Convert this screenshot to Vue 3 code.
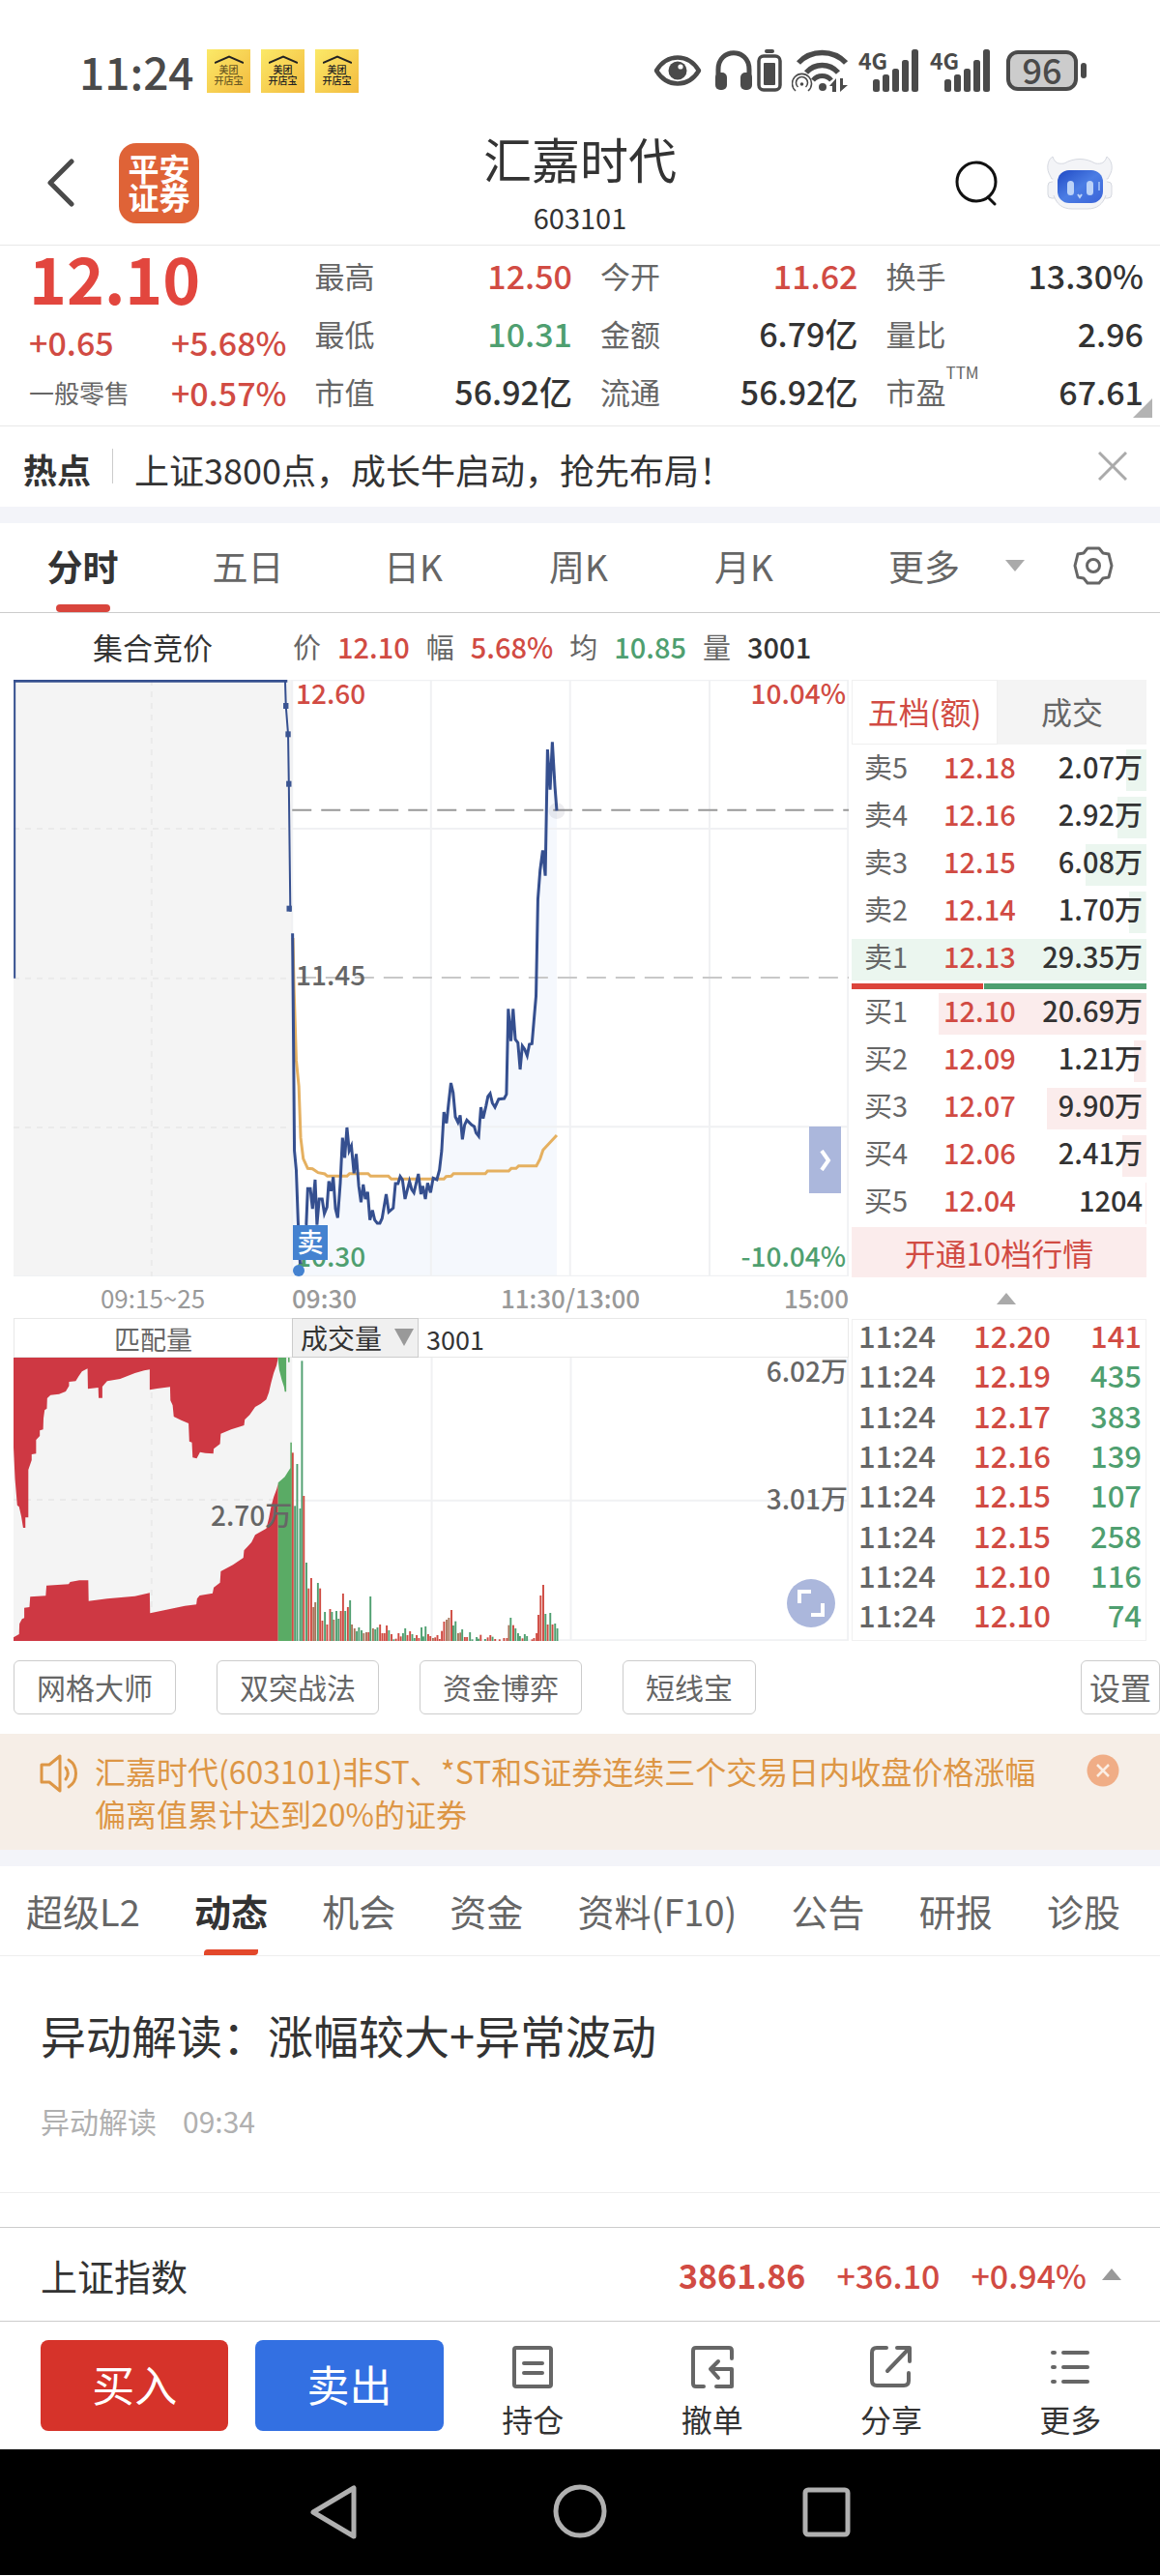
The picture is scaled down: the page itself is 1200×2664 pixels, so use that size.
<template>
  <div class="page">
    <header class="status">
      <span class="clock">11:24</span>
      <span v-for="n in 3" :key="n" class="notice" :class="{ faded: n === 1 }">
        <svg width="30" height="9" viewBox="0 0 30 9" fill="none" stroke="#222" stroke-width="2">
          <path d="M0 8 15 1.5 30 8" />
        </svg>
        <span>美团</span>
        <span>开店宝</span>
      </span>
      <div class="status-icons">
        <svg width="50" height="34" viewBox="0 0 50 34">
          <path d="M3 17C14-1 36-1 47 17 36 35 14 35 3 17Z" fill="none" stroke="#4a4a4a" stroke-width="4.5" stroke-linejoin="round" />
          <circle cx="25" cy="17" r="9.5" fill="#4a4a4a" />
          <circle cx="28" cy="13" r="2.6" fill="#fff" />
        </svg>
        <svg class="gap-m" width="38" height="42" viewBox="0 0 38 42">
          <path d="M3 28V20C3-3 35-3 35 20v8" fill="none" stroke="#4a4a4a" stroke-width="5" />
          <rect x="0" y="23" width="12" height="18" rx="5" fill="#4a4a4a" />
          <rect x="26" y="23" width="12" height="18" rx="5" fill="#4a4a4a" />
        </svg>
        <svg class="gap-s" width="26" height="44" viewBox="0 0 26 44">
          <rect x="8" y="0" width="10" height="4" rx="2" fill="#4a4a4a" />
          <rect x="2" y="7" width="22" height="35" rx="5" fill="none" stroke="#4a4a4a" stroke-width="3.5" />
          <rect x="7" y="14" width="12" height="23" rx="1" fill="#4a4a4a" />
        </svg>
        <svg class="gap-m" width="58" height="44" viewBox="0 0 58 44" fill="none" stroke="#4a4a4a">
          <path d="M7 14C20 0 43 0 56 14" stroke-width="5.5" />
          <path d="M15 24c9-10 24-10 33 0" stroke-width="5.5" />
          <path d="M22 32c5-6 14-6 19 0" stroke-width="5" />
          <circle cx="32" cy="39" r="4" fill="#4a4a4a" stroke="none" />
          <path d="M4 43a10 10 0 1 1 13 0M6.500 39a6 6 0 1 1 8 0" stroke-width="1.600" />
          <circle cx="10.500" cy="36" r="1.800" fill="#4a4a4a" stroke="none" />
          <path d="M39 38l7-8v14h-4v-6zM50 44V30h3v7h5z" fill="#4a4a4a" stroke="none" />
        </svg>
        <span v-for="n in 2" :key="n" class="signal">
          <span class="net">4G</span>
          <svg width="48" height="44" viewBox="0 0 48 44" fill="#4a4a4a">
            <rect x="0" y="31" width="7" height="13" rx="2.500" />
            <rect x="10" y="26" width="7" height="18" rx="2.500" />
            <rect x="20" y="20" width="7" height="24" rx="2.500" />
            <rect x="30" y="11" width="7" height="33" rx="2.500" />
            <rect x="40" y="0" width="7" height="44" rx="2.500" />
          </svg>
        </span>
        <span class="battery">96</span>
        <span class="battery-tip"></span>
      </div>
    </header>

    <div class="topbar">
      <div class="top-left">
        <button class="plain" aria-label="返回">
          <svg width="30" height="50" viewBox="0 0 30 50" fill="none" stroke="#4a4a4a" stroke-width="5" stroke-linecap="round" stroke-linejoin="round">
            <path d="M26 3 4 25 26 47" />
          </svg>
        </button>
        <span class="logo">平安<br />证券</span>
      </div>
      <div class="title">
        <h1>汇嘉时代</h1>
        <span>603101</span>
      </div>
      <div class="top-right">
        <button class="plain" aria-label="搜索">
          <svg width="44" height="48" viewBox="0 0 44 48" fill="none" stroke="#111" stroke-width="3" stroke-linecap="round">
            <circle cx="22" cy="23" r="20" />
            <path d="M35 40l6 6" />
          </svg>
        </button>
        <button class="plain robot" aria-label="智能客服">
          <svg width="68" height="58" viewBox="0 0 68 58">
            <defs>
              <linearGradient id="face" x1="0" y1="0" x2="1" y2="1">
                <stop offset="0" stop-color="#1f49c4" />
                <stop offset="0.500" stop-color="#4b7de4" />
                <stop offset="1" stop-color="#3a63d8" />
              </linearGradient>
            </defs>
            <g fill="#f3f4f7" stroke="#d5d8e0" stroke-width="1">
              <path d="M2 19C-1 12 2 4 6 2c2 6 5 8 12 7 10-6 22-6 32 0 7 1 10-1 12-7 4 3 7 10 4 17l-3 6H5z" />
              <rect x="1" y="28" width="10" height="17" rx="4" />
              <rect x="57" y="28" width="10" height="17" rx="4" />
              <rect x="6" y="8" width="56" height="48" rx="20" stroke="none" />
              <path d="M7 42c3 9 9 14 19 14h16c10 0 16-5 19-14" fill="none" />
            </g>
            <rect x="11" y="16" width="47" height="34" rx="12" fill="url(#face)" />
            <rect x="21" y="27" width="7" height="15" rx="3.500" fill="#bcd3f8" />
            <rect x="41" y="27" width="7" height="15" rx="3.500" fill="#bcd3f8" />
            <path d="M32 41l2 3 2-3" fill="none" stroke="#bcd3f8" stroke-width="2" />
            <path d="M54 28v9" stroke="#90b2f2" stroke-width="2" />
          </svg>
        </button>
      </div>
    </div>

    <section class="quote">
      <div class="quote-main">
        <strong class="price">12.10</strong>
        <div class="pair up"><span>+0.65</span><span>+5.68%</span></div>
        <div class="pair up"><span class="sector">一般零售</span><span>+0.57%</span></div>
      </div>
      <dl v-for="(col, i) in quotes" :key="i">
        <div v-for="q in col" :key="q.label" class="pair">
          <dt>{{ q.label }}<sup v-if="q.sup">{{ q.sup }}</sup></dt>
          <dd :class="q.tone">{{ q.value }}</dd>
        </div>
      </dl>
      <i class="corner"></i>
    </section>

    <section class="hot">
      <strong>热点</strong>
      <a href="#">上证3800点，成长牛启动，抢先布局！</a>
      <button class="plain" aria-label="关闭">
        <svg width="30" height="30" viewBox="0 0 30 30" stroke="#aaa" stroke-width="3"><path d="M1 1 29 29M29 1 1 29" /></svg>
      </button>
    </section>

    <nav class="periods">
      <button v-for="(p, i) in periods" :key="p" class="plain period" :class="{ active: i === 0 }">{{ p }}</button>
      <div class="period-more">
        <select aria-label="更多周期"><option>更多</option></select>
        <svg class="caret" width="20" height="12" viewBox="0 0 20 12" fill="#aaa"><path d="M0 0h20L10 12z" /></svg>
        <button class="plain" aria-label="图表设置">
          <svg width="42" height="42" viewBox="0 0 42 42" fill="none" stroke="#666" stroke-width="3" stroke-linejoin="round">
            <path d="M15 3h12l4 5 6 1 3 12-3 12-6 1-4 5H15l-4-5-6-1-3-12L5 9l6-1z" />
            <circle cx="21" cy="21" r="6.500" />
          </svg>
        </button>
      </div>
    </nav>

    <div class="legend">
      <span class="auction-title">集合竞价</span>
      <span>价</span><b class="up">12.10</b>
      <span>幅</span><b class="up">5.68%</b>
      <span>均</span><b class="down">10.85</b>
      <span>量</span><b>3001</b>
    </div>

    <section class="board">
      <div class="charts">
        <div class="price-chart">
          <svg class="fill" viewBox="37 519 2257 1851" preserveAspectRatio="none">
            <rect x="37" y="519" width="753" height="1851" fill="#f4f4f4" />
            <polygon :points="`791,2370 ${priceLine} 1505,2370`" fill="#f5f8fd" />
            <g class="grid">
              <path d="M790 519V2370M1165 519V2370M1541 519V2370M1918 519V2370M2292 519V2370" />
              <path d="M790 520H2294M790 981H2294M790 1906H2294M37 2369H2294" />
            </g>
            <path class="grid-dash" d="M410 519V2370M37 981H790M37 1445H790M37 1908H790" />
            <path class="base-line" d="M802 1443H2294" />
            <path class="last-line" d="M790 923H2294" />
            <ellipse cx="1505" cy="926" rx="22" ry="25" fill="#889" fill-opacity="0.150" />
            <polyline class="line avg" :points="avgLine" />
            <polyline class="line thin" points="40,1445 40,523" />
            <polyline class="line" points="37,523 777,523" />
            <polyline class="line thin" points="771,523 773,600 779,688 781,842 785,1238" />
            <rect v-for="m in marks" :key="m[1]" :x="m[0] - 7" :y="m[1] - 9" width="14" height="18" fill="#3a5491" />
            <polyline class="line" :points="priceLine" />
          </svg>
          <span class="tag top-start up">12.60</span>
          <span class="tag top-end up">10.04%</span>
          <span class="tag mid-start">11.45</span>
          <span class="tag bottom-start down">10.30</span>
          <span class="tag bottom-end down">-10.04%</span>
          <span class="sell-mark">卖</span>
          <button class="plain handle" aria-label="展开">
            <svg width="12" height="22" viewBox="0 0 12 22" fill="none" stroke="#fff" stroke-width="4"><path d="M2 1l7 10-7 10" /></svg>
          </button>
        </div>

        <div class="axis">
          <span>09:15~25</span>
          <b>09:30</b>
          <b>11:30/13:00</b>
          <b>15:00</b>
        </div>

        <div class="vol-head">
          <span class="match">匹配量</span>
          <span class="vol-pick">
            <select aria-label="副图指标"><option>成交量</option></select>
            <svg width="20" height="18" viewBox="0 0 20 18" fill="#999"><path d="M0 0h20L10 18z" /></svg>
          </span>
          <span class="vol-now">3001</span>
        </div>

        <div class="vol-chart">
          <svg class="fill" viewBox="37 192 2257 879" preserveAspectRatio="none">
            <rect x="37" y="192" width="753" height="879" fill="#f4f4f4" />
            <path class="grid" d="M1167 192V1070M1543 192V1070M2292 192V1070M790 635H2294M790 1069H2294" />
            <path class="grid-dash" d="M410 192V1070M37 633H790" />
            <polygon :points="matchTop" fill="#ce3843" />
            <polygon :points="matchBottom" fill="#ce3843" />
            <g fill="#5aab65">
              <path d="M752 192V200L755 230 762 262 768 283 770 298H774V192ZM779 192V206H783V192Z" />
              <path d="M752 1071V580L762 570 770 562 779 545 785 535V455H789V1071Z" />
            </g>
            <rect v-for="b in bars" :key="b.x" :x="b.x - 2" :y="b.y" width="5" :height="1071 - b.y" :fill="b.fill" />
          </svg>
          <span class="tag vol-max">6.02万</span>
          <span class="tag vol-mid">3.01万</span>
          <span class="tag vol-match">2.70万</span>
          <button class="plain expand" aria-label="全屏">
            <svg width="28" height="28" viewBox="0 0 28 28" fill="none" stroke="#fff" stroke-width="4"><path d="M2 14V2h12M26 14v12H14" /></svg>
          </button>
        </div>
      </div>

      <aside class="depth">
        <div class="depth-tabs">
          <button class="plain active">五档(额)</button>
          <button class="plain">成交</button>
        </div>
        <table class="orders sell">
          <tbody>
            <tr v-for="o in sells" :key="o.name" :style="{ backgroundSize: barSize(o.amount) }">
              <th scope="row">{{ o.name }}</th>
              <td class="up">{{ o.price }}</td>
              <td>{{ o.text }}</td>
            </tr>
          </tbody>
        </table>
        <div class="ratio"><i></i><i></i></div>
        <table class="orders buy">
          <tbody>
            <tr v-for="o in buys" :key="o.name" :style="{ backgroundSize: barSize(o.amount) }">
              <th scope="row">{{ o.name }}</th>
              <td class="up">{{ o.price }}</td>
              <td>{{ o.text }}</td>
            </tr>
          </tbody>
        </table>
        <button class="plain unlock">开通10档行情</button>
        <div class="fold">
          <svg width="20" height="12" viewBox="0 0 20 12" fill="#aaa"><path d="M10 0 20 12H0z" /></svg>
        </div>
        <table class="ticks">
          <tbody>
            <tr v-for="(t, i) in ticks" :key="i">
              <td>11:24</td>
              <td class="up">{{ t[0] }}</td>
              <td :class="i === 0 ? 'up' : 'down'">{{ t[1] }}</td>
            </tr>
          </tbody>
        </table>
      </aside>
    </section>

    <div class="tools">
      <button v-for="t in tools" :key="t" class="plain tool">{{ t }}</button>
      <button class="plain tool setting">设置</button>
    </div>

    <section class="warning">
      <svg class="horn" width="40" height="40" viewBox="0 0 40 40" fill="none" stroke="#dd9645" stroke-width="3" stroke-linejoin="round" stroke-linecap="round">
        <path d="M2 11h8L21 2v36L10 29H2z" />
        <path d="M27 14c3 4 3 8 0 12M30 6c10 6 10 22 0 28" />
      </svg>
      <p>汇嘉时代(603101)非ST、*ST和S证券连续三个交易日内收盘价格涨幅偏离值累计达到20%的证券</p>
      <button class="plain" aria-label="关闭提示">
        <svg width="34" height="34" viewBox="0 0 34 34">
          <circle cx="17" cy="17" r="16.500" fill="#f0ad86" />
          <path d="M11 11l12 12M23 11 11 23" stroke="#fbeee4" stroke-width="2.500" />
        </svg>
      </button>
    </section>

    <nav class="topics">
      <a v-for="(t, i) in topics" :key="t" href="#" :class="{ active: i === 1 }">{{ t }}</a>
    </nav>

    <article class="news">
      <h2>异动解读：涨幅较大+异常波动</h2>
      <p><span>异动解读</span><time>09:34</time></p>
    </article>

    <section class="index-bar">
      <span class="index-name">上证指数</span>
      <strong>3861.86</strong>
      <span>+36.10</span>
      <span>+0.94%</span>
      <svg width="20" height="12" viewBox="0 0 20 12" fill="#999"><path d="M10 0 20 12H0z" /></svg>
    </section>

    <footer class="actions">
      <button class="plain trade buy-btn">买入</button>
      <button class="plain trade sell-btn">卖出</button>
      <button v-for="a in actions" :key="a.label" class="plain action">
        <svg width="44" height="44" viewBox="0 0 44 44" fill="none" stroke="#666" stroke-width="4" stroke-linecap="round" stroke-linejoin="round">
          <path :d="a.icon" />
        </svg>
        <span>{{ a.label }}</span>
      </button>
    </footer>

    <nav class="system">
      <button class="plain" aria-label="返回">
        <svg width="60" height="60" viewBox="0 0 60 60"><path d="M51 5v50L9 30z" /></svg>
      </button>
      <button class="plain" aria-label="主页">
        <svg width="60" height="60" viewBox="0 0 60 60"><circle cx="30" cy="29" r="25" /></svg>
      </button>
      <button class="plain" aria-label="最近任务">
        <svg width="60" height="60" viewBox="0 0 60 60"><rect x="8" y="7" width="44" height="46" rx="3" /></svg>
      </button>
    </nav>
  </div>
</template>

<script setup>
const quotes = [
  [
    { label: '最高', value: '12.50', tone: 'up' },
    { label: '最低', value: '10.31', tone: 'down' },
    { label: '市值', value: '56.92亿' }
  ],
  [
    { label: '今开', value: '11.62', tone: 'up' },
    { label: '金额', value: '6.79亿' },
    { label: '流通', value: '56.92亿' }
  ],
  [
    { label: '换手', value: '13.30%' },
    { label: '量比', value: '2.96' },
    { label: '市盈', sup: 'TTM', value: '67.61' }
  ]
];

const periods = ['分时', '五日', '日K', '周K', '月K'];
const tools = ['网格大师', '双突战法', '资金博弈', '短线宝'];
const topics = ['超级L2', '动态', '机会', '资金', '资料(F10)', '公告', '研报', '诊股'];

const sells = [
  { name: '卖5', price: '12.18', text: '2.07万', amount: 2.07 },
  { name: '卖4', price: '12.16', text: '2.92万', amount: 2.92 },
  { name: '卖3', price: '12.15', text: '6.08万', amount: 6.08 },
  { name: '卖2', price: '12.14', text: '1.70万', amount: 1.7 },
  { name: '卖1', price: '12.13', text: '29.35万', amount: 29.35 }
];

const buys = [
  { name: '买1', price: '12.10', text: '20.69万', amount: 20.69 },
  { name: '买2', price: '12.09', text: '1.21万', amount: 1.21 },
  { name: '买3', price: '12.07', text: '9.90万', amount: 9.9 },
  { name: '买4', price: '12.06', text: '2.41万', amount: 2.41 },
  { name: '买5', price: '12.04', text: '1204', amount: 0.12 }
];

// bar length is relative to the largest order in the book
const maxAmount = 29.35;
const barSize = (amount) => `${(amount / maxAmount) * 100}% 43px`;

const ticks = [
  ['12.20', 141],
  ['12.19', 435],
  ['12.17', 383],
  ['12.16', 139],
  ['12.15', 107],
  ['12.15', 258],
  ['12.10', 116],
  ['12.10', 74]
];

const actions = [
  { label: '持仓', icon: 'M5 2h34q2 0 2 2v36q0 2-2 2H5q-2 0-2-2V4q0-2 2-2zM13 18h19M13 28h19' },
  { label: '撤单', icon: 'M42 13V5q0-3-3-3H5Q2 2 2 5v34q0 3 3 3h8M26 42h16V24H20M28 16l-8 8 8 9' },
  { label: '分享', icon: 'M17 2H7Q2 2 2 7v29q0 5 5 5h28q5 0 5-5V28M28 2h13v14M40 3 18 26' },
  { label: '更多', icon: 'M4 7h2M4 22h2M4 37h2M15 7h25M15 22h25M15 37h25' }
];

const marks = [[773, 600], [779, 688], [781, 842], [782, 1229]];

const priceLine =
  '791,1306 794,1700 796,1980 801,2040 806,2200 812,2345 820,2330 828,2210 832,2098 839,2098 845,2160 852,2070 ' +
  '857,2210 863,2130 871,2130 877,2175 884,2155 889,2075 895,2105 901,2062 907,2160 913,2188 920,2080 926,1940 ' +
  '932,2002 938,1908 944,1980 950,1965 957,2050 963,1990 970,2090 976,2140 982,2085 988,2130 994,2108 1000,2195 ' +
  '1007,2165 1013,2195 1020,2205 1027,2205 1033,2190 1044,2115 1051,2170 1063,2158 1069,2082 1076,2082 1082,2060 ' +
  '1088,2070 1095,2130 1107,2075 1113,2100 1119,2110 1131,2052 1138,2115 1143,2090 1150,2130 1156,2080 1164,2110 ' +
  '1171,2065 1181,2070 1188,2040 1194,1980 1200,1860 1207,1895 1213,1830 1219,1770 1225,1800 1231,1875 1238,1892 ' +
  '1244,1870 1250,1945 1256,1900 1262,1885 1275,1900 1282,1905 1287,1925 1294,1935 1300,1845 1306,1880 1314,1840 ' +
  '1319,1812 1325,1803 1331,1832 1338,1845 1348,1820 1363,1818 1369,1805 1374,1540 1381,1640 1387,1540 1393,1635 ' +
  '1400,1645 1406,1728 1412,1655 1418,1665 1425,1685 1431,1650 1438,1648 1443,1580 1449,1500 1454,1200 1460,1110 ' +
  '1467,1048 1474,1127 1480,735 1487,860 1493,712 1500,850 1505,925';

const avgLine =
  '792,1320 795,1480 801,1700 808,1780 813,1940 820,2005 832,2035 845,2036 860,2048 878,2052 885,2059 938,2059 ' +
  '945,2051 995,2051 1002,2059 1050,2059 1058,2068 1200,2068 1206,2060 1220,2059 1226,2051 1312,2051 1318,2043 ' +
  '1375,2043 1382,2035 1395,2035 1402,2027 1450,2027 1460,2005 1468,1978 1505,1932';

const matchTop =
  '37,192 37,470 41,568 47,650 52,655 58,685 63,720 69,720 69,688 77,688 77,540 86,510 86,492 98,490 98,447 ' +
  '108,435 108,418 117,415 118,380 121,355 127,350 128,318 137,308 160,305 178,297 187,280 187,267 205,265 ' +
  '213,250 222,235 237,226 238,289 266,285 267,317 277,317 277,282 290,265 325,258 365,240 390,232 405,229 ' +
  '405,292 425,288 460,283 461,325 467,340 470,375 490,386 510,396 512,452 519,455 521,502 532,505 541,485 ' +
  '555,488 577,490 578,475 595,460 597,428 625,415 650,406 660,402 662,384 675,370 690,345 705,335 720,322 ' +
  '727,300 733,270 740,240 748,215 752,192';

const matchBottom =
  '37,1071 37,1060 52,1050 53,1018 60,1003 66,1000 66,968 80,966 82,934 124,931 126,899 186,895 190,888 ' +
  '215,883 239,883 240,947 290,940 365,932 405,922 406,985 450,974 500,962 531,958 533,940 540,930 575,923 ' +
  '578,905 595,890 597,855 630,835 658,813 660,790 680,765 690,742 720,722 727,690 733,655 740,625 748,600 ' +
  '752,583 752,1071';

// r = 涨, g = 跌, b = 平
const fills = { r: '#cf4b42', g: '#4f9f70', b: '#a8745a' };
const barData =
  'r791,487 g797,652 g803,522 g811,660 g816,202 r821,621 g828,828 r834,908 r841,876 b847,966 b852,951 g859,891 ' +
  'r865,908 r871,1008 g878,981 r884,1020 r892,972 g897,981 b902,1005 g909,978 g915,1002 r921,978 r927,924 ' +
  'g933,978 r940,966 g946,945 b951,1020 b958,1032 g964,1041 g970,1029 g977,1038 b983,1047 b990,1044 r996,1044 ' +
  'g1001,933 b1008,1032 g1014,1035 g1020,1029 r1027,1020 r1033,1047 r1039,1047 r1045,1023 g1051,1038 r1058,1050 ' +
  'g1064,1066 r1070,1064 r1077,1047 r1083,1057 g1089,1047 g1095,1032 r1101,1053 r1108,1041 g1114,1050 g1120,1062 ' +
  'r1126,1053 r1132,1062 g1139,1029 g1144,1057 g1150,1026 r1157,1050 r1163,1056 b1170,1062 r1176,1060 r1182,1053 ' +
  'r1188,1065 r1194,1040 r1200,1011 b1207,1005 b1213,999 r1220,975 g1225,1023 g1231,1010 b1238,1047 b1244,1045 ' +
  'g1249,1035 r1256,1059 r1262,1059 g1270,1044 g1276,1066 g1288,1059 g1293,1064 r1299,1052 g1311,1065 r1318,1060 ' +
  'r1325,1053 g1331,1058 r1338,1065 r1350,1066 r1362,1062 r1370,1062 b1375,1022 g1380,999 r1387,1022 g1393,1032 ' +
  'g1400,1047 g1405,1056 r1412,1063 g1418,1050 g1424,1056 r1438,1066 r1443,1062 r1450,1047 r1455,990 r1461,930 ' +
  'r1468,897 g1474,987 r1480,1020 g1487,984 r1493,1020 g1500,1017 g1506,1032';

const bars = barData.split(' ').map((item) => {
  const [x, y] = item.slice(1).split(',').map(Number);
  return { x, y, fill: fills[item[0]] };
});
</script>

<style>
body {
  margin: 0;
  background: #fff;
}
</style>

<style scoped>
.page {
  font-family: "Noto Sans CJK SC", "Noto Sans", sans-serif;
  color: #333;
  background: #fff;
}

.page svg {
  display: block;
  flex: none;
}

.plain {
  margin: 0;
  padding: 0;
  border: 0;
  background: none;
  font: inherit;
  color: inherit;
}

select {
  appearance: none;
  margin: 0;
  padding: 0;
  border: 0;
  background: none;
  font: inherit;
  color: inherit;
}

a {
  color: inherit;
  text-decoration: none;
}

.up {
  color: #d14b43;
}

.down {
  color: #4f9f70;
}

/* status bar */
.status {
  display: flex;
  align-items: center;
  padding: 48px 76px 27px 82px;
  height: 50px;
  color: #4a4a4a;
}

.clock {
  width: 132px;
  font-size: 46px;
  font-weight: 500;
  line-height: 50px;
}

.notice {
  display: flex;
  flex-direction: column;
  align-items: center;
  width: 45px;
  height: 39px;
  padding-top: 6px;
  margin-right: 11px;
  background: linear-gradient(135deg, #fbe968, #f3bb3f);
  color: #222;
  font-size: 10px;
  font-weight: 500;
  line-height: 11px;
}

.faded {
  color: #6b5a24;
}

.status-icons {
  display: flex;
  align-items: center;
  margin-left: auto;
}

.gap-m {
  margin-left: 14px;
}

.gap-s {
  margin-left: 5px;
}

.gap-s + .gap-m {
  margin-left: 10px;
}

.signal {
  position: relative;
  padding-left: 15px;
  margin-left: 11px;
}

.net {
  position: absolute;
  left: 0;
  top: 0;
  font-size: 23px;
  font-weight: 700;
  line-height: 22px;
}

.battery {
  box-sizing: border-box;
  width: 74px;
  height: 42px;
  margin-left: 16px;
  border: 4px solid #4a4a4a;
  border-radius: 12px;
  background: #ccc;
  font-size: 36px;
  font-weight: 500;
  line-height: 31px;
  text-align: center;
}

.battery-tip {
  width: 6px;
  height: 16px;
  margin-left: 3px;
  border-radius: 3px;
  background: #4a4a4a;
}

/* title bar */
.topbar {
  display: grid;
  grid-template-columns: 1fr auto 1fr;
  align-items: center;
  height: 128px;
  border-bottom: 1px solid #e8e8e8;
}

.top-left {
  display: flex;
  align-items: center;
  gap: 45px;
  padding-left: 48px;
}

.logo {
  width: 83px;
  height: 73px;
  padding-top: 10px;
  border-radius: 18px;
  background: #df6337;
  color: #fff;
  font-size: 32px;
  font-weight: 700;
  line-height: 30px;
  text-align: center;
}

.title {
  text-align: center;
}

.title h1 {
  margin: 0 0 8px;
  font-size: 50px;
  font-weight: 400;
  line-height: 62px;
}

.title span {
  display: block;
  font-size: 29px;
  line-height: 44px;
}

.top-right {
  display: flex;
  align-items: center;
  justify-content: flex-end;
  gap: 51px;
  padding-right: 49px;
}

/* quote */
.quote {
  position: relative;
  display: grid;
  grid-template-columns: repeat(4, minmax(0, 1fr));
  gap: 29px;
  padding: 1px 17px 5px 30px;
  border-bottom: 1px solid #e8e8e8;
  font-size: 34px;
  font-weight: 500;
  line-height: 60px;
  white-space: nowrap;
}

.quote dl,
.quote dd {
  margin: 0;
}

.quote dt {
  position: relative;
  color: #666;
  font-size: 31px;
  font-weight: 400;
}

.quote sup {
  position: absolute;
  left: 100%;
  top: 0;
  font-size: 17px;
  line-height: 20px;
}

.pair {
  display: flex;
  justify-content: space-between;
}

.quote-main .pair {
  line-height: 52px;
}

.price {
  display: block;
  margin-bottom: 10px;
  color: #e2463e;
  font-size: 66px;
  font-weight: 700;
  line-height: 63px;
}

.sector {
  color: #666;
  font-size: 26px;
  font-weight: 400;
}

.corner {
  position: absolute;
  right: 8px;
  bottom: 8px;
  border-left: 20px solid transparent;
  border-bottom: 20px solid #b3b3b3;
}

/* hot line */
.hot {
  display: flex;
  align-items: center;
  padding: 12px 34px 13px 24px;
  border-bottom: 17px solid #f3f4f9;
  font-size: 35px;
  line-height: 52px;
}

.hot strong {
  padding: 6px 22px 0 0;
}

.hot a {
  flex: 1;
  padding: 6px 0 0 23px;
  background: linear-gradient(#ccc, #ccc) left center / 1px 36px no-repeat;
  font-size: 36px;
}

/* period tabs */
.periods {
  display: grid;
  grid-template-columns: repeat(5, minmax(0, 171fr)) minmax(0, 345fr);
  height: 92px;
  border-bottom: 1px solid #ccc;
  color: #666;
  font-size: 37px;
}

.period {
  position: relative;
  padding-bottom: 4px;
}

.period.active {
  color: #333;
  font-weight: 700;
}

.period.active::after {
  content: "";
  position: absolute;
  left: 50%;
  bottom: 0;
  width: 56px;
  height: 8px;
  margin-left: -28px;
  border-radius: 4px;
  background: #d9453c;
}

.period-more {
  display: flex;
  align-items: center;
  justify-content: space-between;
  padding: 0 48px 4px 64px;
}

.period-more .caret {
  margin-left: -4px;
}

/* legend above the chart */
.legend {
  display: flex;
  gap: 17px;
  padding-left: 30px;
  color: #666;
  font-size: 29px;
  line-height: 69px;
}

.legend b {
  font-weight: 500;
}

.legend b:last-child {
  color: #333;
}

.auction-title {
  width: 256px;
  color: #333;
  font-size: 31px;
  text-align: center;
}

.board {
  display: grid;
  grid-template-columns: minmax(0, 864fr) minmax(0, 305fr);
  gap: 3px;
  padding: 0 14px;
}

.price-chart {
  position: relative;
  height: 617px;
}

.vol-chart {
  position: relative;
  height: 293px;
}

.fill {
  width: 100%;
  height: 100%;
}

.fill path,
.fill polyline {
  vector-effect: non-scaling-stroke;
}

.grid {
  fill: none;
  stroke: #f0f1f3;
  stroke-width: 2px;
}

.grid-dash {
  fill: none;
  stroke: #eaeaea;
  stroke-width: 2px;
  stroke-dasharray: 6 6;
}

.base-line {
  stroke: #c8c8c8;
  stroke-width: 2px;
  stroke-dasharray: 20 10;
}

.last-line {
  stroke: #999;
  stroke-width: 2px;
  stroke-dasharray: 20 10;
}

.line {
  fill: none;
  stroke: #354f8f;
  stroke-width: 3px;
}

.line.thin {
  stroke-width: 2px;
}

.line.avg {
  stroke: #e5b060;
}

.tag {
  position: absolute;
  color: #666;
  font-size: 28px;
  font-weight: 500;
  line-height: 32px;
}

.tag.up {
  color: #d14b43;
}

.tag.down {
  color: #4f9f70;
}

.top-start {
  left: 292px;
  top: -3px;
}

.top-end {
  right: 3px;
  top: -3px;
}

.mid-start {
  left: 292px;
  top: 288px;
}

.bottom-start {
  left: 292px;
  bottom: 6px;
}

.bottom-end {
  right: 3px;
  bottom: 6px;
}

.sell-mark {
  position: absolute;
  left: 289px;
  bottom: 17px;
  width: 36px;
  height: 36px;
  background: #4482d0;
  color: #fff;
  font-size: 27px;
  font-weight: 500;
  line-height: 34px;
  text-align: center;
}

.sell-mark::after {
  content: "";
  position: absolute;
  left: 0;
  bottom: -17px;
  width: 12px;
  height: 12px;
  border-radius: 6px;
  background: #4482d0;
}

.handle {
  position: absolute;
  right: 8px;
  bottom: 86px;
  display: grid;
  place-items: center;
  width: 33px;
  height: 69px;
  background: #abb7dc;
}

.axis {
  display: grid;
  grid-template-columns: 288fr 144fr 288fr 144fr;
  color: #999;
  font-size: 26px;
  line-height: 43px;
  white-space: nowrap;
}

.axis b {
  font-weight: 500;
}

.axis span,
.axis b:nth-child(3) {
  text-align: center;
}

.axis b:last-child {
  text-align: right;
}

.vol-head {
  box-sizing: border-box;
  display: flex;
  height: 41px;
  border: 1px solid #e8e8e8;
  font-size: 27px;
  line-height: 41px;
}

.match {
  width: 287px;
  color: #666;
  text-align: center;
}

.vol-pick {
  position: relative;
  box-sizing: border-box;
  width: 131px;
  margin: -1px 0;
  padding-left: 8px;
  border: 1px solid #ccc;
  background: #f0f0f0;
  font-size: 28px;
}

.vol-pick select {
  width: 100%;
  height: 39px;
  line-height: 39px;
  vertical-align: top;
}

.vol-pick svg {
  position: absolute;
  right: 4px;
  top: 10px;
  pointer-events: none;
}

.vol-now {
  padding-left: 8px;
}

.vol-max {
  right: 1px;
  top: -3px;
}

.vol-mid {
  right: 1px;
  top: 129px;
}

.vol-match {
  left: 204px;
  top: 146px;
}

.expand {
  position: absolute;
  right: 14px;
  bottom: 14px;
  display: grid;
  place-items: center;
  width: 50px;
  height: 50px;
  border-radius: 25px;
  background: #abb7dc;
}

/* order book */
.depth-tabs {
  display: grid;
  grid-template-columns: 151fr 154fr;
  height: 67px;
  color: #666;
  font-size: 32px;
}

.depth-tabs button {
  padding-bottom: 4px;
  background: #f4f4f4;
}

.depth-tabs .active {
  box-sizing: border-box;
  border: 1px solid #f0f0f0;
  background: #fff;
  color: #d14b43;
}

.orders {
  width: 100%;
  table-layout: fixed;
  border-collapse: collapse;
  font-size: 29px;
  font-weight: 500;
  line-height: 41px;
}

.orders tr {
  height: 49px;
  background-position: right center;
  background-repeat: no-repeat;
}

.sell {
  margin-top: 2px;
}

.sell tr {
  background-image: linear-gradient(#ebf6ef, #ebf6ef);
}

.buy {
  margin-top: 1px;
}

.buy tr {
  background-image: linear-gradient(#fbecec, #fbecec);
}

.orders th,
.orders td {
  padding: 0;
  vertical-align: top;
}

.orders th {
  width: 82px;
  padding-left: 13px;
  color: #666;
  font-size: 29px;
  font-weight: 400;
  text-align: left;
}

.orders td:nth-child(2) {
  width: 80px;
}

.orders td:last-child {
  padding-right: 4px;
  text-align: right;
}

.ratio {
  display: grid;
  grid-template-columns: 136fr 168fr;
  gap: 1px;
  height: 6px;
}

.ratio i {
  background: #4f9f70;
}

.ratio i:first-child {
  background: #dc443c;
}

.unlock {
  display: block;
  width: 100%;
  height: 52px;
  background: #fbecec;
  color: #d14b43;
  font-size: 32px;
  line-height: 50px;
}

.fold {
  display: grid;
  place-items: center;
  height: 43px;
  padding-left: 14px;
}

.ticks {
  box-sizing: border-box;
  width: 100%;
  height: 333px;
  border: 1px solid #f0f0f0;
  border-collapse: collapse;
  table-layout: fixed;
  color: #666;
  font-size: 31px;
  font-weight: 500;
  line-height: 32px;
}

.ticks td {
  padding: 0 0 0 6px;
  vertical-align: top;
}

.ticks td:not(:first-child) {
  padding: 0 4px 0 0;
  text-align: right;
}

.ticks td:nth-child(2) {
  width: 110px;
}

.ticks td:last-child {
  width: 90px;
}

/* tools */
.tools {
  display: flex;
  gap: 42px;
  padding: 20px 0 20px 14px;
}

.tool {
  box-sizing: border-box;
  height: 56px;
  padding: 0 23px 2px;
  border: 1px solid #ccc;
  border-radius: 6px;
  color: #666;
  font-size: 30px;
}

.setting {
  margin-left: auto;
  padding: 0 8px 2px;
  font-size: 32px;
}

/* risk notice */
.warning {
  display: flex;
  align-items: flex-start;
  padding: 16px 42px 16px 41px;
  border-bottom: 17px solid #f3f4f9;
  background: #f6eee7;
  background-clip: padding-box;
  color: #dd9645;
  font-size: 32px;
  line-height: 44px;
}

.horn {
  margin-top: 5px;
}

.warning p {
  flex: 1;
  margin: 0 28px 0 17px;
}

.warning .plain {
  padding-top: 5px;
}

/* topic tabs */
.topics {
  display: flex;
  justify-content: space-between;
  padding: 0 41px 0 27px;
  border-bottom: 1px solid #eee;
  color: #666;
  font-size: 38px;
  line-height: 92px;
  white-space: nowrap;
}

.topics .active {
  position: relative;
  color: #333;
  font-weight: 700;
}

.topics .active::after {
  content: "";
  position: absolute;
  left: 50%;
  bottom: 0;
  width: 56px;
  height: 6px;
  margin-left: -28px;
  border-radius: 4px 0 4px 0;
  background: #e3482b;
}

.news {
  padding: 49px 42px 52px;
  margin-bottom: 35px;
  border-bottom: 1px solid #eee;
}

.news h2 {
  margin: 0;
  font-size: 47px;
  font-weight: 400;
  line-height: 64px;
}

.news p {
  display: flex;
  gap: 27px;
  margin: 35px 0 0;
  color: #b0b0b0;
  font-size: 30px;
  line-height: 44px;
}

.index-bar {
  display: flex;
  align-items: center;
  gap: 32px;
  height: 96px;
  padding: 0 40px 0 42px;
  border-top: 1px solid #ccc;
  border-bottom: 1px solid #ccc;
  color: #d14b43;
  font-size: 34px;
  font-weight: 500;
}

.index-name {
  flex: 1;
  color: #333;
  font-size: 38px;
  font-weight: 400;
}

.index-bar svg {
  margin-left: -16px;
}

/* trade and shortcut buttons */
.actions {
  display: flex;
  align-items: flex-start;
  padding: 19px 0 10px 42px;
}

.trade {
  flex: 194;
  height: 94px;
  padding-bottom: 4px;
  border-radius: 8px;
  color: #fff;
  font-size: 44px;
}

.buy-btn {
  margin-right: 28px;
  background: #d6332a;
}

.sell-btn {
  background: #3370e2;
}

.action {
  flex: 185;
  display: flex;
  flex-direction: column;
  align-items: center;
  gap: 9px;
  padding-top: 6px;
  font-size: 32px;
  line-height: 44px;
}

.system {
  display: flex;
  justify-content: center;
  gap: 195px;
  padding: 35px 0;
  background: #000;
}

.system svg {
  fill: none;
  stroke: #b0b0b0;
  stroke-width: 5;
  stroke-linejoin: round;
}
</style>
